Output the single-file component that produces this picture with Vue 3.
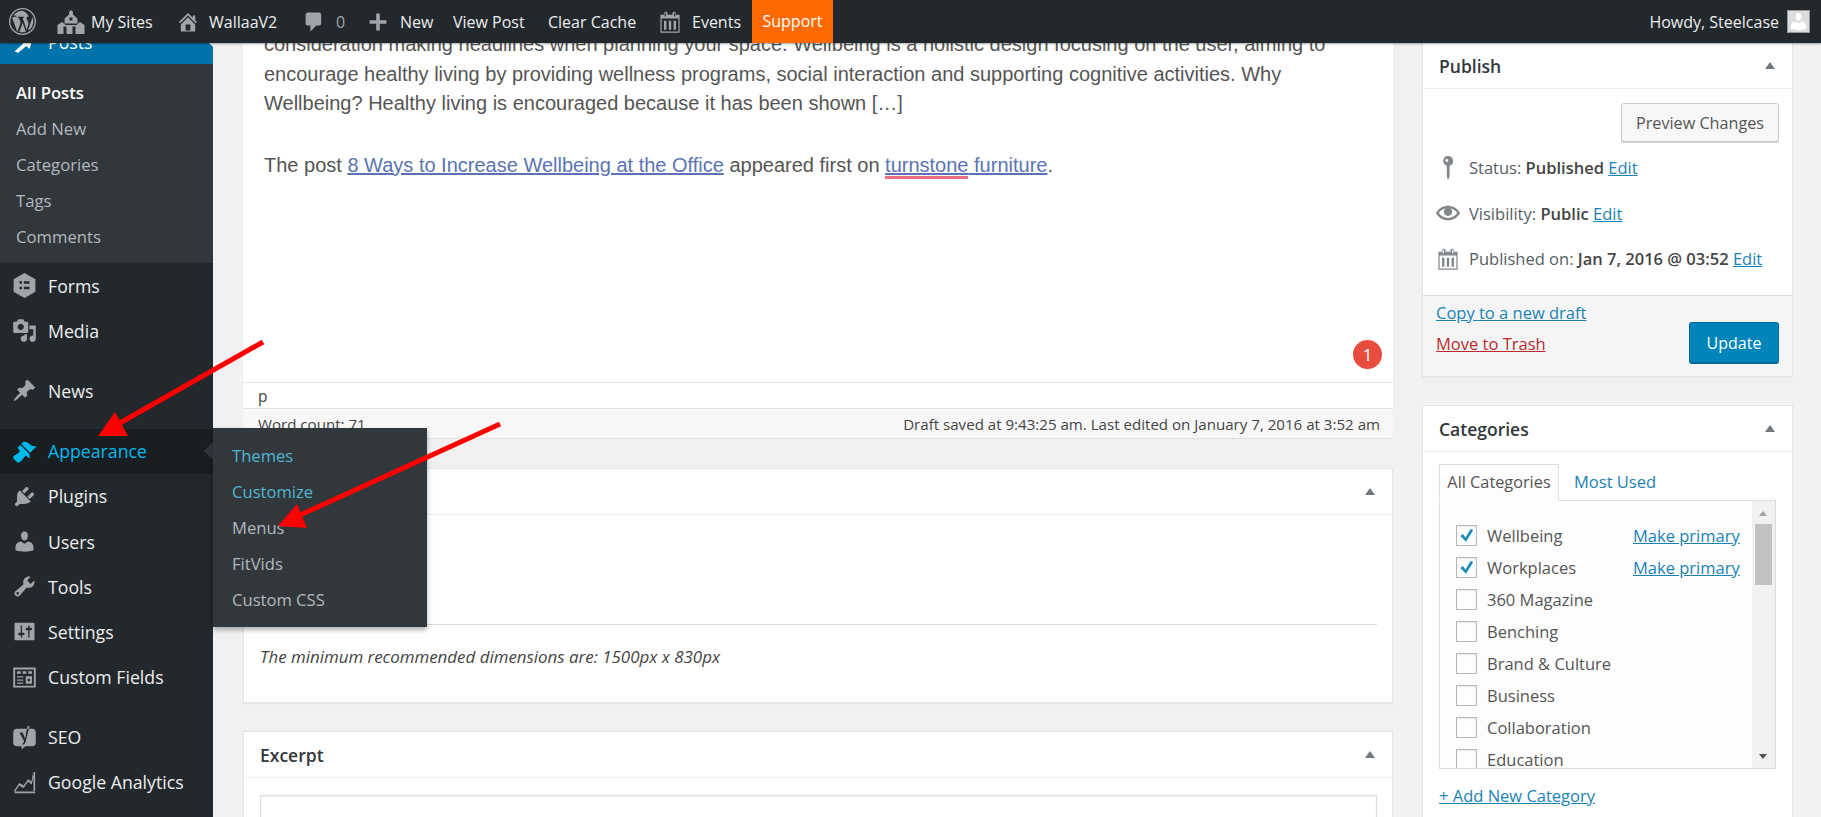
<script setup>
const I = {
  wp: ['M10 0a10 10 0 1 1 0 20 10 10 0 0 1 0-20zm0 1a9 9 0 1 0 0 18 9 9 0 0 0 0-18z','M2.3 7.2l3.9 10.5 2.4-6.9-1.2-3.4-1.1-.1v-.8h4.9v.8l-1.1.1 3 8.9.9-2.9c.5-1.6.5-2.6-.1-3.7-.5-.8-.9-1.3-.9-2s.6-1.4 1.4-1.4h.2A8 8 0 0 0 10 2a8 8 0 0 0-6.7 3.6h2.2v.8l-1.2.1zM17.2 6.4c.5 1 .8 2.2.8 3.6a8 8 0 0 1-4 6.9l2.4-7c.5-1.2.8-2.2.8-3.5zM10.1 10.9l-2.4 6.8a8 8 0 0 0 4.8-.1z'],
  sites: ['M10 2l1.3 1.2V5l3 2.7V11H5.7V7.7l3-2.7V3.2zM9 7v2h2V7zM1 12l3-2 2 1.500V12h8v-.5l2-1.500 3 2v6h-6v-5h-2v5H7v-5H5v5H1z'],
  home: ['M16 8.5l1.53 1.53-1.06 1.06L10 4.62l-6.47 6.47-1.06-1.06L10 2.5l4 4v-2h2v4zm-6-2.46l6 5.99V18H4v-5.97zM12 17v-5H8v5h4z'],
  comment: ['M5 2h9c1.1 0 2 .9 2 2v7c0 1.1-.9 2-2 2h-2l-5 5v-5H5c-1.1 0-2-.9-2-2V4c0-1.1.9-2 2-2z'],
  plus: ['M17 8.500v3h-5.500V17h-3v-5.500H3v-3h5.500V3h3v5.500z'],
  cal: ['M15 4h3v15H2V4h3V3c0-.41.15-.76.44-1.06.29-.29.65-.44 1.06-.44s.77.15 1.06.44c.29.3.44.65.44 1.06v1h4V3c0-.41.15-.76.44-1.06.29-.29.65-.44 1.06-.44s.77.15 1.06.44c.29.3.44.65.44 1.06v1zM6 5.500c.41 0 .5-.09.5-.5V3c0-.41-.09-.5-.5-.5s-.5.09-.5.5v2c0 .41.09.5.5.5zm8 0c.41 0 .5-.09.5-.5V3c0-.41-.09-.5-.5-.5s-.5.09-.5.5v2c0 .41.09.5.5.5zM17 18V7H3v11h14zM7 9v7.500H5V9h2zm4 0v7.500H9V9h2zm4 0v7.500h-2V9h2z'],
  post: ['M10.440 3.020l1.820-1.820 6.360 6.350-1.830 1.820c-1.050-.68-2.480-.57-3.410.36l-.75.75c-.92.93-1.040 2.350-.35 3.410l-1.830 1.820-2.410-2.410-2.800 2.790c-.42.42-3.380 2.710-3.800 2.290s1.860-3.390 2.280-3.810l2.790-2.790L4.100 9.360l1.830-1.820c1.050.69 2.480.57 3.400-.36l.75-.75c.93-.92 1.050-2.350.37-3.410z'],
  forms: ['M10 0l8.700 5v10L10 20l-8.700-5V5zM6 6.500v2h2v-2zm3.500 0v2H14v-2zM6 11v2h2v-2zm3.500 0v2H14v-2z'],
  media: ['M13 11V4c0-.55-.45-1-1-1h-1.670L9 1H5L3.670 3H2c-.55 0-1 .45-1 1v7c0 .55.45 1 1 1h10c.55 0 1-.45 1-1zM7 4.500c1.380 0 2.500 1.120 2.500 2.500S8.380 9.500 7 9.500 4.500 8.380 4.500 7 5.620 4.500 7 4.500zM14 6h5v10.500c0 1.380-1.120 2.500-2.500 2.500S14 17.880 14 16.500s1.120-2.500 2.500-2.500c.17 0 .34.02.5.05V9h-3V6zm-4 8.050V13h2v3.500c0 1.380-1.120 2.500-2.500 2.500S7 17.880 7 16.500 8.120 14 9.500 14c.17 0 .34.02.5.05z'],
  brush: ['M14.480 11.060L7.410 3.990l1.500-1.500c.5-.56 2.300-.47 3.510.32 1.210.8 1.430 1.280 2.910 2.100 1.180.64 2.450 1.260 4.450.85zm-.71.71L6.700 4.700 4.930 6.470c-.39.39-.39 1.020 0 1.410l1.060 1.060c.39.39.39 1.030 0 1.420-.6.6-1.430 1.110-2.210 1.690-.35.26-.7.53-1.010.84C1.430 13.230.4 14.980 1.100 15.680l3.010 3.010c.7.7 2.450-.33 3.790-1.670.31-.31.58-.66.84-1.010.58-.78 1.090-1.610 1.690-2.210.39-.39 1.030-.39 1.420 0l1.060 1.060c.39.39 1.020.39 1.410 0z'],
  plug: ['M13.110 4.360L9.870 7.600 8 5.730l3.240-3.240c.35-.34 1.050-.2 1.560.32.52.51.66 1.210.31 1.550zm-8 1.770l.91-1.120 9.010 9.010-1.190.84c-.71.71-2.630 1.160-3.820 1.160H6.140L4.900 17.260c-.59.59-1.540.59-2.120 0-.59-.58-.59-1.530 0-2.120l1.240-1.240v-3.880c0-1.130.4-3.190 1.090-3.890zm7.260 3.970l3.240-3.240c.34-.35 1.040-.21 1.550.31.52.51.66 1.210.31 1.550l-3.240 3.250z'],
  user: ['M10 9.250c-2.270 0-2.730-3.440-2.730-3.440C7 4.020 7.820 2 9.970 2c2.160 0 2.980 2.020 2.710 3.810 0 0-.41 3.440-2.680 3.440zm0 2.570L12.720 10c2.390 0 4.520 2.330 4.520 4.530v2.490s-3.650 1.130-7.240 1.130c-3.650 0-7.240-1.130-7.240-1.130v-2.490c0-2.250 1.940-4.480 4.470-4.480z'],
  tool: ['M16.680 9.770c-1.340 1.340-3.300 1.670-4.950.99l-5.410 6.520c-.99.99-2.590.99-3.580 0s-.99-2.590 0-3.570l6.520-5.420c-.68-1.650-.35-3.610.99-4.950 1.280-1.280 3.120-1.620 4.720-1.060l-2.890 2.890 2.820 2.820 2.860-2.870c.53 1.580.18 3.390-1.080 4.650zM3.810 16.210c.4.39 1.040.39 1.430 0 .4-.4.4-1.040 0-1.430-.39-.4-1.030-.4-1.430 0-.39.39-.39 1.030 0 1.430z'],
  sett: ['M18 16V4c0-.55-.45-1-1-1H3c-.55 0-1 .45-1 1v12c0 .55.45 1 1 1h14c.55 0 1-.45 1-1zM8 11h1c.55 0 1 .45 1 1s-.45 1-1 1H8v1.500c0 .28-.22.5-.5.5s-.5-.22-.5-.5V13H6c-.55 0-1-.45-1-1s.45-1 1-1h1V5.500c0-.28.22-.5.5-.5s.5.22.5.5V11zm5-2h-1c-.55 0-1-.45-1-1s.45-1 1-1h1V5.500c0-.28.22-.5.5-.5s.5.22.5.5V7h1c.55 0 1 .45 1 1s-.45 1-1 1h-1v5.500c0 .28-.22.5-.5.5s-.5-.22-.5-.5V9z'],
  table: ['M1 2h18v16H1zm1.500 1.500v13h15v-13zM4 5h3v2H4zm4.500 0h3v2h-3zM13 5h3v2h-3zM4 9h5v1H4zm0 2.500h5v1H4zM4 14h5v1H4zM11 9h5v6h-5zm1.500 2v2h2v-2z'],
  yoast: ['M4 3h12c2 0 3 1 3 3v8c0 2-1 3-3 3H10.500L8 19.500 7.500 17H4c-2 0-3-1-3-3V6c0-2 1-3 3-3zM14 .8l-3 12.200c-.4 1.700-1.200 2.500-2.500 3v-1.500c.8-.3 1.100-.7 1.200-1.500L6 6h2.500l2 5 1-6 1-4.200z'],
  chart: ['M2 17.200h16.500v1.300H2zM17.200 1.500h1.300v16h-1.300zM1.500 16.800l4.300-6.500 3.500 2 3.500-5 2.700 1.900L16.800 2.500l1 .3-2 8.700-3-2.100-3.500 5-3.500-2-3.700 5.300z']
}
const sub = ['Add New','Categories','Tags','Comments']
const menu = [
  { label:'Forms', icon:I.forms, cls:'' },
  { label:'Media', icon:I.media, cls:'' },
  { label:'News', icon:I.post, cls:'sep' },
  { label:'Appearance', icon:I.brush, cls:'sep current' },
  { label:'Plugins', icon:I.plug, cls:'' },
  { label:'Users', icon:I.user, cls:'' },
  { label:'Tools', icon:I.tool, cls:'' },
  { label:'Settings', icon:I.sett, cls:'' },
  { label:'Custom Fields', icon:I.table, cls:'' },
  { label:'SEO', icon:I.yoast, cls:'sep' },
  { label:'Google Analytics', icon:I.chart, cls:'' }
]
const fly = [{t:'Themes',on:1},{t:'Customize',on:1},{t:'Menus'},{t:'FitVids'},{t:'Custom CSS'}]
const cats = [
  {t:'Wellbeing',c:1},{t:'Workplaces',c:1},{t:'360 Magazine'},{t:'Benching'},
  {t:'Brand & Culture'},{t:'Business'},{t:'Collaboration'},{t:'Education'}
]
</script>

<template>
  <div class="page">
    <header class="bar">
      <svg class="logo" viewBox="0 0 20 20"><path v-for="d in I.wp" :key="d" :d="d" fill-rule="evenodd"/></svg>
      <svg class="bi sites" viewBox="0 0 20 20"><path :d="I.sites[0]" fill-rule="evenodd"/></svg>
      <span class="bt mysites">My Sites</span>
      <svg class="bi home" viewBox="0 0 20 20"><path :d="I.home[0]"/></svg>
      <span class="bt walla">WallaaV2</span>
      <svg class="bi cmt" viewBox="0 0 20 20"><path :d="I.comment[0]"/></svg>
      <span class="bt zero">0</span>
      <svg class="bi plus" viewBox="0 0 20 20"><path :d="I.plus[0]"/></svg>
      <span class="bt new">New</span>
      <span class="bt view">View Post</span>
      <span class="bt clear">Clear Cache</span>
      <svg class="bi cal" viewBox="0 0 20 20"><path :d="I.cal[0]"/></svg>
      <span class="bt events">Events</span>
      <span class="support">Support</span>
      <span class="howdy">Howdy, Steelcase</span>
      <span class="avatar">
        <svg viewBox="0 0 20 20"><path :d="I.user[0]"/></svg>
      </span>
    </header>

    <aside class="side">
      <div class="posts">
        <svg class="mi" viewBox="0 0 20 20"><path d="M2 18l7-6.500-2.500-2.500L17 6l-3 10-2.500-2.500L5 19z"/></svg>
        <span>Posts</span>
      </div>
      <ul class="subnav">
        <li class="strong">All Posts</li>
        <li v-for="s in sub" :key="s">{{ s }}</li>
      </ul>
      <div v-for="m in menu" :key="m.label" class="item" :class="m.cls">
        <svg class="mi" viewBox="0 0 20 20"><path v-for="d in m.icon" :key="d" :d="d" fill-rule="evenodd"/></svg>
        <span>{{ m.label }}</span>
        <div v-if="m.cls.includes('current')" class="fly">
          <div v-for="f in fly" :key="f.t" class="flyi" :class="{ on: f.on }">{{ f.t }}</div>
        </div>
      </div>
    </aside>

    <main class="left">
      <section class="editor">
        <div class="copy">
          <p>consideration making headlines when planning your space. Wellbeing is a holistic design focusing on the user, aiming to encourage healthy living by providing wellness programs, social interaction and supporting cognitive activities. Why Wellbeing? Healthy living is encouraged because it has been shown […]</p>
          <p class="second">The post <a href="#">8 Ways to Increase Wellbeing at the Office</a> appeared first on <a href="#"><span class="spell">turnstone</span> furniture</a>.</p>
        </div>
        <span class="badge">1</span>
        <div class="path">p</div>
        <div class="status"><span>Word count: 71</span><span>Draft saved at 9:43:25 am. Last edited on January 7, 2016 at 3:52 am</span></div>
      </section>

      <section class="box image">
        <div class="hd empty"><i class="tri"></i></div>
        <div class="imgbody">
          <hr />
          <em>The minimum recommended dimensions are: 1500px x 830px</em>
        </div>
      </section>

      <section class="box excerpt">
        <div class="hd"><h2>Excerpt</h2><i class="tri"></i></div>
        <div class="exbody"><div class="ta"></div></div>
      </section>
    </main>

    <aside class="right">
      <section class="box publish">
        <div class="hd"><h2>Publish</h2><i class="tri"></i></div>
        <div class="pubtop"><button class="prev">Preview Changes</button></div>
        <div class="mrow">
          <svg class="pi" viewBox="0 0 20 20"><path fill-rule="evenodd" d="M10 0a4.200 4.200 0 0 1 1.300 8.200V17l-1.300 3-1-3V8.200A4.200 4.200 0 0 1 10 0zM9 2.500a1.200 1.200 0 1 0 .01 0z"/></svg>
          <span>Status: <b>Published</b> <a href="#">Edit</a></span>
        </div>
        <div class="mrow">
          <svg class="pi" viewBox="0 0 20 20"><path d="M19.700 9.400C17.700 6 14 3.900 10 3.900S2.300 6 .3 9.400L0 10l.3.6c2 3.400 5.700 5.500 9.700 5.500s7.700-2.100 9.700-5.500l.3-.6-.3-.6zM10 14.100c-3.100 0-6-1.600-7.700-4.100C3.600 8 5.700 6.600 8 6.100c-.9.6-1.500 1.700-1.500 2.900 0 1.900 1.600 3.500 3.500 3.500s3.500-1.600 3.500-3.500c0-1.200-.6-2.300-1.500-2.900 2.300.5 4.400 1.900 5.700 3.900-1.700 2.500-4.600 4.100-7.700 4.100z"/></svg>
          <span>Visibility: <b>Public</b> <a href="#">Edit</a></span>
        </div>
        <div class="mrow">
          <svg class="pi" viewBox="0 0 20 20"><path :d="I.cal[0]"/></svg>
          <span>Published on: <b>Jan 7, 2016 @ 03:52</b> <a href="#">Edit</a></span>
        </div>
        <div class="pubfoot">
          <div class="footlinks">
            <a href="#">Copy to a new draft</a>
            <a href="#" class="trash">Move to Trash</a>
          </div>
          <button class="update">Update</button>
        </div>
      </section>

      <section class="box cats">
        <div class="hd"><h2>Categories</h2><i class="tri"></i></div>
        <div class="catbody">
          <div class="tabs"><span class="tab">All Categories</span><span class="tab2">Most Used</span></div>
          <div class="panel">
            <ul class="clist">
              <li v-for="c in cats" :key="c.t">
                <span class="cb">
                  <svg v-if="c.c" viewBox="0 0 20 20"><path d="M3.500 10.500l2.500-2 3 3.500 5.500-9 2.500 1.500-7.500 12z" fill="#1e8cbe"/></svg>
                </span>
                <span class="cl">{{ c.t }}</span>
                <a v-if="c.c" href="#" class="mp">Make primary</a>
              </li>
            </ul>
            <div class="sb">
              <i class="up"></i>
              <i class="thumb"></i>
              <i class="down"></i>
            </div>
          </div>
          <a href="#" class="addcat">+ Add New Category</a>
        </div>
      </section>
    </aside>

    <svg class="arrows" width="1821" height="817" viewBox="0 0 1821 817">
      <path d="M263 342L118 424" stroke="#f00" stroke-width="5" fill="none"/>
      <path d="M98 436L115 412L128 436z" fill="#f00"/>
      <path d="M500 424L298 516" stroke="#f00" stroke-width="5" fill="none"/>
      <path d="M278 526L297 504L307 528z" fill="#f00"/>
    </svg>
  </div>
</template>

<style>
html, body { margin: 0; background: #f1f1f1; overflow: hidden; }
</style>

<style scoped>
.page {
  position: relative;
  display: flex;
  width: 1821px;
  height: 817px;
  overflow: hidden;
  background: #f1f1f1;
  font-family: "Open Sans", "Liberation Sans", sans-serif;
  font-size: 16.500px;
  color: #444;
}
a { color: #1a82b6; text-decoration: underline; }
ul { margin: 0; padding: 0; list-style: none; }
p { margin: 0; }

/* top bar */
.bar {
  position: absolute;
  z-index: 5;
  inset: 0 0 auto 0;
  height: 43px;
  display: flex;
  align-items: center;
  background: #23282d;
  color: #eee;
  box-shadow: 0 1px 2px rgba(0,0,0,.35);
  white-space: nowrap;
  font-size: 16px;
}
.bar svg { fill: #a0a5aa; flex: none; }
.logo { width: 27px; height: 27px; margin-left: 9px; }
.bi { width: 24px; height: 24px; }
.sites { width: 30px; height: 30px; margin-left: 20px; }
.mysites { margin-left: 5px; width: 64px; }
.home { margin-left: 21px; }
.walla { margin-left: 9px; width: 72px; }
.cmt { margin-left: 21px; }
.zero { margin-left: 10px; width: 10px; color: #a0a5aa; }
.plus { margin-left: 20px; }
.new { margin-left: 10px; width: 33px; }
.view { margin-left: 20px; width: 73px; }
.clear { margin-left: 22px; width: 89px; }
.cal { margin-left: 21px; }
.events { margin-left: 10px; width: 49px; }
.support {
  margin-left: 11px;
  width: 81px;
  height: 43px;
  line-height: 43px;
  text-align: center;
  background: #ff6a00;
  color: #fff;
}
.howdy { margin-left: auto; }
.avatar {
  width: 23px;
  height: 23px;
  margin: 0 11px 0 8px;
  background: #ddd;
  border: 1px solid #999;
  box-sizing: border-box;
  display: flex;
}
.avatar svg { fill: #fff; width: 100%; height: 100%; }

/* sidebar */
.side {
  flex: none;
  width: 213px;
  background: #23282d;
  color: #eee;
  margin-top: 19px;
  height: 798px;
  font-size: 17.700px;
}
.posts {
  position: relative;
  height: 45px;
  display: flex;
  align-items: center;
  background: #0073aa;
  color: #fff;
}
.posts::after {
  content: "";
  position: absolute;
  right: 0;
  top: 10px;
  border: 9px solid transparent;
  border-right-color: #f1f1f1;
  border-left: 0;
}
.mi { flex: none; width: 25px; height: 25px; margin: 0 11px 0 12px; fill: #a0a5aa; }
.posts .mi { fill: #fff; }
.subnav {
  background: #32373c;
  padding: 11px 0 9px;
  height: 179px;
  color: #b4b9be;
  font-size: 16.700px;
}
.subnav li { height: 36px; line-height: 36px; padding-left: 16px; }
.subnav .strong { color: #fff; font-weight: 600; }
.item {
  position: relative;
  height: 45.200px;
  display: flex;
  align-items: center;
}
.item.sep { margin-top: 15px; }
.item.current { background: #191e23; color: #00b9eb; }
.item.current .mi { fill: #00b9eb; }
.item.current::after {
  content: "";
  position: absolute;
  right: 0;
  top: 13px;
  border: 9px solid transparent;
  border-right-color: #32373c;
  border-left: 0;
}
.fly {
  position: absolute;
  z-index: 3;
  left: 213px;
  top: -1px;
  width: 214px;
  height: 199px;
  padding-top: 10px;
  box-sizing: border-box;
  background: #32373c;
  box-shadow: 0 3px 5px rgba(0,0,0,.3);
  color: #b4b9be;
  font-size: 16.600px;
}
.flyi { height: 36px; line-height: 36px; padding-left: 19px; }
.flyi.on { color: #4fb6d3; }

/* left column */
.left {
  flex: none;
  width: 1150px;
  margin-left: 30px;
}
.editor {
  position: relative;
  height: 438px;
  background: #fff;
  box-shadow: 0 1px 1px rgba(0,0,0,.06);
  display: flex;
  flex-direction: column;
}
.copy {
  flex: 1;
  padding: 30px 21px 0;
  font-family: "Liberation Sans", Arial, sans-serif;
  font-size: 20px;
  line-height: 29.500px;
  color: #555;
}
.second { margin-top: 32px; }
.copy a { color: #5a74b3; }
.spell { border-bottom: 3px solid #ee6c82; }
.badge {
  position: absolute;
  left: 1110px;
  top: 340px;
  width: 29px;
  height: 29px;
  border-radius: 50%;
  background: #e74c3c;
  color: #fff;
  text-align: center;
  line-height: 29px;
  font-size: 17px;
}
.path {
  height: 27px;
  line-height: 27px;
  padding-left: 15px;
  border-top: 1px solid #e5e5e5;
  border-bottom: 1px solid #e5e5e5;
  box-sizing: border-box;
  margin-top: 2px;
  flex: none;
  font-size: 15.500px;
}
.status {
  flex: none;
  height: 29px;
  display: flex;
  justify-content: space-between;
  align-items: center;
  padding: 0 13px 0 15px;
  background: #f7f7f7;
  font-size: 15.100px;
}
.box {
  background: #fff;
  border: 1px solid #e5e5e5;
  box-sizing: border-box;
  box-shadow: 0 1px 1px rgba(0,0,0,.04);
}
.hd {
  position: relative;
  display: flex;
  align-items: center;
  height: 46px;
  padding: 0 16px;
  border-bottom: 1px solid #eee;
  box-sizing: border-box;
}
.hd h2 {
  margin: 0;
  font-size: 17.500px;
  font-weight: 600;
  color: #32373c;
}
.tri {
  position: absolute;
  right: 17px;
  top: 19px;
  border-left: 5px solid transparent;
  border-right: 5px solid transparent;
  border-bottom: 7px solid #72777c;
}
.image { margin-top: 30px; height: 235px; }
.imgbody { padding: 0 15px 0 16px; }
.imgbody hr {
  border: 0;
  border-top: 1px solid #ddd;
  margin: 109px 0 20px;
}
.imgbody em { font-size: 16.900px; color: #444; }
.excerpt { margin-top: 28px; height: 200px; }
.exbody { padding: 17px 15px 0 16px; }
.ta {
  height: 60px;
  border: 1px solid #ddd;
  box-shadow: inset 0 1px 2px rgba(0,0,0,.07);
}

/* right column */
.right {
  flex: none;
  width: 371px;
  margin-left: 29px;
  margin-top: 42px;
}
.publish { height: 335px; display: flex; flex-direction: column; }
.pubtop { display: flex; justify-content: flex-end; padding: 14px 13px 0 0; height: 39px; margin-bottom: 3px; }
.prev {
  width: 158px;
  height: 39px;
  background: #f7f7f7;
  border: 1px solid #ccc;
  border-radius: 3px;
  box-shadow: 0 1px 0 #ccc;
  font: inherit;
  font-size: 16.200px;
  color: #555;
  padding: 0;
}
.mrow {
  display: flex;
  align-items: center;
  height: 45.500px;
  padding-left: 13px;
  white-space: nowrap;
  color: #555d66;
}
.mrow b { font-weight: 600; color: #444; }
.pi { flex: none; width: 24px; height: 24px; margin-right: 9px; fill: #82878c; }
.mrow a { font-weight: 400; }
.pubfoot {
  flex: 1;
  margin-top: 13px;
  position: relative;
  display: flex;
  justify-content: space-between;
  align-items: flex-end;
  padding: 0 13px 12px 13px;
  background: #f5f5f5;
  border-top: 1px solid #ddd;
}
.footlinks { display: flex; flex-direction: column; gap: 8px; align-self: flex-start; padding-top: 5px; }
.trash { color: #b92c2c; }
.update {
  width: 90px;
  height: 42px;
  background: #0085ba;
  border: 1px solid #006799;
  border-bottom-width: 2px;
  border-radius: 3px;
  color: #fff;
  font: inherit;
  font-size: 16px;
  padding: 0;
}
.cats { margin-top: 28px; height: 460px; }
.catbody { padding: 11px 16px 0 16px; }
.tabs { display: flex; align-items: flex-end; height: 37px; }
.tab {
  width: 120px;
  height: 37px;
  line-height: 35px;
  text-align: center;
  border: 1px solid #ddd;
  border-bottom: 1px solid #fdfdfd;
  box-sizing: border-box;
  background: #fdfdfd;
  position: relative;
  z-index: 1;
  margin-bottom: -1px;
  font-size: 16.300px;
  color: #555;
}
.tab2 { margin-left: 15px; line-height: 35px; height: 36px; font-size: 16.500px; color: #1a82b6; }
.panel {
  display: flex;
  height: 269px;
  border: 1px solid #ddd;
  box-sizing: border-box;
  background: #fdfdfd;
  overflow: hidden;
}
.clist { flex: 1; padding: 18px 0 0 16px; }
.clist li { position: relative; display: flex; align-items: center; height: 32px; }
.cb {
  flex: none;
  width: 21px;
  height: 21px;
  border: 1px solid #b4b9be;
  box-sizing: border-box;
  background: #fff;
  box-shadow: inset 0 1px 2px rgba(0,0,0,.1);
  display: flex;
}
.cb svg { width: 100%; height: 100%; }
.cl { margin-left: 10px; color: #555; white-space: nowrap; }
.mp { position: absolute; left: 177px; white-space: nowrap; }
.sb {
  position: relative;
  flex: none;
  width: 23px;
  background: #f1f1f1;
}
.thumb {
  position: absolute;
  left: 3px;
  top: 23px;
  width: 17px;
  height: 61px;
  background: #c1c1c1;
}
.up, .down {
  position: absolute;
  left: 7px;
  border-left: 4.500px solid transparent;
  border-right: 4.500px solid transparent;
}
.up { top: 10px; border-bottom: 5px solid #a3a3a3; }
.down { top: 253px; border-top: 5px solid #505050; }
.addcat { display: inline-block; margin-top: 15px; font-size: 16.500px; }
.arrows { position: absolute; z-index: 4; left: 0; top: 0; pointer-events: none; }
</style>
